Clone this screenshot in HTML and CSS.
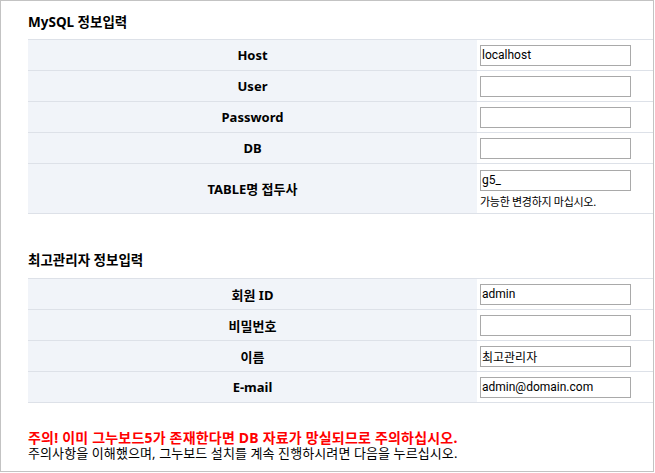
FILE: index.html
```html
<!DOCTYPE html>
<html lang="ko">
<head>
<meta charset="utf-8">
<title>그누보드5 설치</title>
<link rel="stylesheet" href="styles.css">
</head>
<body>
<div class="frame">
  <h2 class="title">MySQL 정보입력</h2>
  <table class="form">
    <tr><th>Host</th><td><input class="field" type="text" value="localhost"></td></tr>
    <tr><th>User</th><td><input class="field" type="text" value=""></td></tr>
    <tr><th>Password</th><td><input class="field" type="text" value=""></td></tr>
    <tr><th>DB</th><td><input class="field" type="text" value=""></td></tr>
    <tr class="tall"><th>TABLE명 접두사</th><td><input class="field" type="text" value="g5_"><div class="help">가능한 변경하지 마십시오.</div></td></tr>
  </table>
  <h2 class="title title-second">최고관리자 정보입력</h2>
  <table class="form">
    <tr><th>회원 ID</th><td><input class="field" type="text" value="admin"></td></tr>
    <tr><th>비밀번호</th><td><input class="field" type="text" value=""></td></tr>
    <tr><th>이름</th><td><input class="field" type="text" value="최고관리자"></td></tr>
    <tr><th>E-mail</th><td><input class="field" type="text" value="admin@domain.com"></td></tr>
  </table>
  <p class="warn">주의! 이미 그누보드5가 존재한다면 DB 자료가 망실되므로 주의하십시오.</p>
  <p class="note">주의사항을 이해했으며, 그누보드 설치를 계속 진행하시려면 다음을 누르십시오.</p>
</div>
</body>
</html>
```
FILE: styles.css
```css
html, body {
  margin: 0;
  padding: 0;
  background: #fff;
}
body {
  font-family: "Noto Sans", "Noto Sans CJK KR", sans-serif;
  color: #000;
}
.frame {
  box-sizing: border-box;
  width: 654px;
  height: 472px;
  border: 1px solid #c3c3c3;
  padding-left: 27px;
  overflow: hidden;
}
.title {
  margin: 0;
  padding: 13px 0 9px;
  font-size: 13.5px;
  line-height: 16px;
  font-weight: bold;
  color: #000;
}
.title-second {
  padding: 38px 0 10px;
}
.form {
  width: 625px;
  border-collapse: collapse;
  border-spacing: 0;
}
.form th,
.form td {
  border-top: 1px solid #dde1e8;
  border-bottom: 1px solid #dde1e8;
  height: 30px;
  padding: 0;
  vertical-align: middle;
}
.form th {
  width: 449px;
  background: #f1f4f9;
  font-size: 13px;
  font-weight: bold;
  text-align: center;
  color: #000;
}
.form td {
  padding-left: 3px;
  text-align: left;
}
.form tr.tall th,
.form tr.tall td {
  height: 48px;
}
.form tr.tall td {
  padding-top: 1px;
}
.field {
  display: block;
  box-sizing: border-box;
  width: 151px;
  height: 21px;
  margin: 0;
  padding: 0 1px;
  border: 1px solid #a9a9a9;
  font-family: "Roboto", "Noto Sans CJK KR", sans-serif;
  font-size: 12px;
  color: #000;
  background: #fff;
  outline: none;
}
.help {
  margin-top: 4px;
  font-size: 11px;
  line-height: 14px;
  letter-spacing: -0.3px;
  color: #000;
}
.warn {
  margin: 26px 0 0;
  font-size: 14px;
  line-height: 17px;
  font-weight: bold;
  letter-spacing: 0.2px;
  color: #ff0000;
}
.note {
  margin: 0;
  font-size: 13px;
  line-height: 15px;
  letter-spacing: 0.1px;
  color: #000;
}
```
